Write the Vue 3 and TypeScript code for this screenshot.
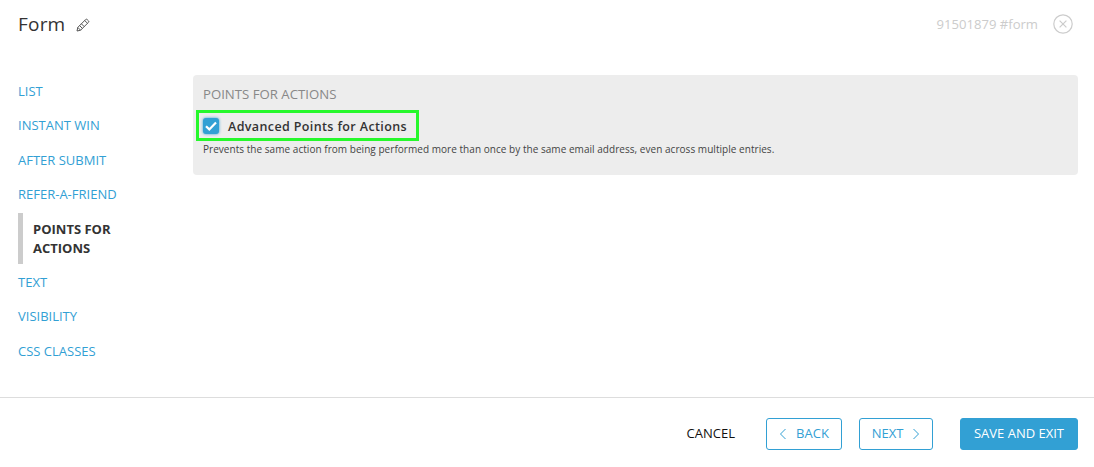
<script setup lang="ts">
const before: string[] = ['LIST', 'INSTANT WIN', 'AFTER SUBMIT', 'REFER-A-FRIEND']
const after: string[] = ['TEXT', 'VISIBILITY', 'CSS CLASSES']
</script>

<template>
  <div class="page">
    <header class="header">
      <div class="title">
        <span>Form</span>
        <svg class="pencil" width="14" height="14" viewBox="0 0 14 14" fill="none" stroke="#555" stroke-width="1">
          <path d="M1 13l.8-3.6 7.9-7.9a1 1 0 0 1 1.4 0l1.4 1.4a1 1 0 0 1 0 1.4l-7.9 7.9z" stroke-linejoin="round" />
          <path d="M1.8 9.4l2.8 2.8M8.7 2.5l2.8 2.8M3.6 7.6l2.8 2.8M5.4 5.8l2.8 2.8" />
        </svg>
      </div>
      <div class="meta">
        <span>91501879 #form</span>
        <svg width="20" height="20" viewBox="0 0 20 20" fill="none" stroke="#ccc" stroke-width="1.2">
          <circle cx="10" cy="10" r="9.2" />
          <path d="M6.6 6.6l6.8 6.8M13.4 6.6l-6.8 6.8" />
        </svg>
      </div>
    </header>

    <main class="body">
      <nav class="nav">
        <a v-for="item in before" :key="item" class="link">{{ item }}</a>
        <div class="active">POINTS FOR<br />ACTIONS</div>
        <a v-for="item in after" :key="item" class="link">{{ item }}</a>
      </nav>

      <section class="panel">
        <div class="panel-title">POINTS FOR ACTIONS</div>
        <div class="highlight">
          <span class="check">
            <svg width="12" height="10" viewBox="0 0 12 10" fill="none" stroke="#fff" stroke-width="2.2">
              <path d="M1 5.2l3.3 3.2L11 1.4" />
            </svg>
          </span>
          <span class="label">Advanced Points for Actions</span>
        </div>
        <p class="hint">Prevents the same action from being performed more than once by the same email address, even across multiple entries.</p>
      </section>
    </main>

    <footer class="footer">
      <span class="cancel">CANCEL</span>
      <button class="btn back">
        <svg width="8" height="12" viewBox="0 0 8 12" fill="none" stroke="#32a0d4" stroke-width="1"><path d="M6.5 1L1.5 6l5 5" /></svg>
        BACK
      </button>
      <button class="btn next">
        NEXT
        <svg width="8" height="12" viewBox="0 0 8 12" fill="none" stroke="#32a0d4" stroke-width="1"><path d="M1.5 1l5 5-5 5" /></svg>
      </button>
      <button class="btn save">SAVE AND EXIT</button>
    </footer>
  </div>
</template>

<style scoped>
.page {
  width: 1094px;
  height: 467px;
  display: flex;
  flex-direction: column;
  background: #fff;
  font-family: "Open Sans", "Liberation Sans", sans-serif;
  overflow: hidden;
}
.header {
  height: 48px;
  padding: 0 21px 0 18px;
  display: flex;
  align-items: center;
  justify-content: space-between;
}
.title {
  display: flex;
  align-items: center;
  gap: 12px;
  font-size: 19px;
  letter-spacing: 0.2px;
  color: #333;
}
.pencil {
  margin: 1px 0 0 -1px;
}
.meta {
  display: flex;
  align-items: center;
  gap: 15px;
  font-size: 13.1px;
  color: #ccc;
}
.body {
  flex: 1;
  display: flex;
  align-items: flex-start;
  padding: 27px 16px 0 18px;
}
.nav {
  width: 175px;
  display: flex;
  flex-direction: column;
  margin-top: -1px;
  font-size: 13px;
  line-height: 19px;
}
.link {
  color: #32a0d4;
  padding: 7.75px 0;
}
.active {
  margin: 1px 0 1px;
  padding: 6.5px 0;
  border-left: 5px solid #ccc;
  padding-left: 10px;
  font-weight: 700;
  color: #333;
}
.panel {
  flex: 1;
  height: 100px;
  box-sizing: border-box;
  padding: 10px 10px 0;
  background: #ededed;
  border-radius: 4px;
}
.panel-title {
  font-size: 13.2px;
  line-height: 18px;
  color: #888;
}
.highlight {
  width: 223px;
  height: 31px;
  margin: 7px 0 0 -7px;
  box-sizing: border-box;
  border: 3px solid #26f82c;
  padding-left: 4px;
  display: flex;
  align-items: center;
  gap: 9px;
}
.check {
  width: 16px;
  height: 16px;
  border-radius: 3px;
  background: #32a0d4;
  box-shadow: 0 0 3px #32a0d4;
  display: flex;
  align-items: center;
  justify-content: center;
}
.label {
  font-size: 12.5px;
  font-weight: 600;
  letter-spacing: 0.38px;
  line-height: 17px;
  padding-top: 1px;
  color: #333;
}
.hint {
  margin: 1px 0 0;
  font-size: 10px;
  line-height: 14px;
  letter-spacing: 0.04px;
  color: #444;
}
.footer {
  height: 70px;
  box-sizing: border-box;
  border-top: 1px solid #ddd;
  padding: 20px 16px 0 0;
  display: flex;
  align-items: flex-start;
  justify-content: flex-end;
  font-size: 13px;
}
.cancel {
  line-height: 31px;
  color: #111;
  margin-right: 31px;
}
.btn {
  height: 32px;
  box-sizing: border-box;
  font: inherit;
  line-height: 1;
  border: 1px solid #32a0d4;
  border-radius: 3px;
  background: #fff;
  color: #32a0d4;
  display: flex;
  align-items: center;
  justify-content: center;
  padding: 0 0 1px;
}
.back {
  width: 76px;
  gap: 9px;
  margin-right: 17px;
}
.next {
  width: 74px;
  gap: 9px;
  margin-right: 27px;
}
.save {
  width: 118px;
  background: #32a0d4;
  color: #fff;
}
</style>
